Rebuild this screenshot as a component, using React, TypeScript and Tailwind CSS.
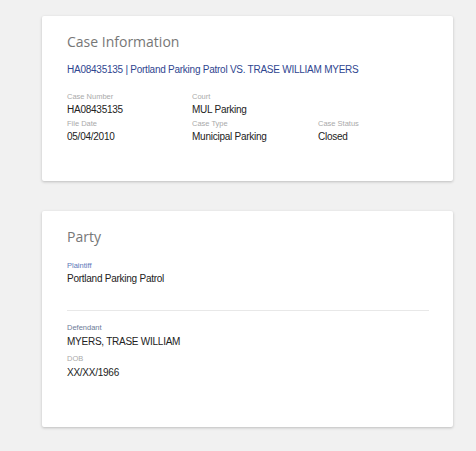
import React from 'react';

const caseFields = [
  [
    { label: 'Case Number', value: 'HA08435135' },
    { label: 'Court', value: 'MUL Parking' },
    null,
  ],
  [
    { label: 'File Date', value: '05/04/2010' },
    { label: 'Case Type', value: 'Municipal Parking' },
    { label: 'Case Status', value: 'Closed' },
  ],
];

function Card({ title, children, className = '' }: { title: string; children: React.ReactNode; className?: string }) {
  return (
    <div className={`ml-[42px] w-[411px] bg-white rounded-[2px] shadow-[0_1px_3px_rgba(0,0,0,0.22)] pl-[25px] pr-[24px] pt-[16px] ${className}`}>
      <h2 className="text-[14px] leading-[20px] text-[#777] font-['Open_Sans',sans-serif]">{title}</h2>
      {children}
    </div>
  );
}

export default function App() {
  return (
    <div className="min-h-[451px] bg-[#f1f1f1] pt-[16px] pb-[24px] font-['Liberation_Sans',Arial,sans-serif]">
      <Card title="Case Information" className="pb-[38px]">
        <p className="mt-[11px] text-[10px] tracking-[-0.25px] leading-[14px] text-[#2f4690]">
          HA08435135 | Portland Parking Patrol VS. TRASE WILLIAM MYERS
        </p>
        <div className="mt-[15px] flex flex-col gap-[3px]">
          {caseFields.map((row, i) => (
            <div key={i} className="grid grid-cols-[125px_126px_1fr]">
              {row.map((f, j) =>
                f ? (
                  <div key={j}>
                    <div className="text-[7.5px] leading-[10px] text-[#aaa]">{f.label}</div>
                    <div className="mt-[1px] text-[10px] tracking-[-0.25px] leading-[13px] text-[#222]">{f.value}</div>
                  </div>
                ) : (
                  <div key={j} />
                )
              )}
            </div>
          ))}
        </div>
      </Card>

      <Card title="Party" className="mt-[30px] pb-[48px]">
        <div className="mt-[14px]">
          <div className="text-[7.5px] leading-[10px] text-[#5b78b8]">Plaintiff</div>
          <div className="mt-[1px] text-[10px] tracking-[-0.25px] leading-[13px] text-[#222]">Portland Parking Patrol</div>
        </div>
        <div className="mt-[25px] h-px bg-[#e8e8e8]" />
        <div className="mt-[12px]">
          <div className="text-[7.5px] leading-[10px] text-[#6c7c98]">Defendant</div>
          <div className="mt-[2px] text-[10px] tracking-[-0.25px] leading-[13px] text-[#222]">MYERS, TRASE WILLIAM</div>
          <div className="mt-[6px] text-[7.5px] leading-[10px] text-[#aaa]">DOB</div>
          <div className="mt-[2px] text-[10px] tracking-[-0.25px] leading-[13px] text-[#222]">XX/XX/1966</div>
        </div>
      </Card>
    </div>
  );
}
